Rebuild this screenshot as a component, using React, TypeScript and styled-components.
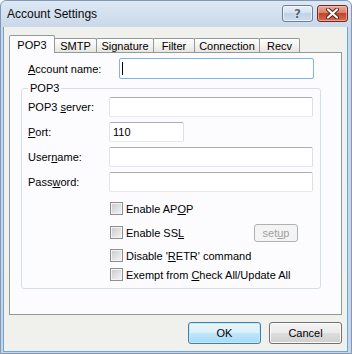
import styled, { createGlobalStyle } from "styled-components";

const GlobalStyle = createGlobalStyle`
  html, body { margin:0; padding:0; background:#ffffff; }
  body {
    font-family: "Liberation Sans", Arial, sans-serif;
    font-size:11px;
    color:#000;
  }
`;

// Window : Vista basic 스타일의 대화상자 프레임.
const Window = styled.div`
  box-sizing:border-box;
  width:352px;
  height:354px;
  display:flex;
  flex-direction:column;
  padding:0 3px 1px 2px;
  border:1px solid #8298b3;
  border-radius:6px 6px 0 0;
  background:linear-gradient(#dde8f4, #c9d8ea 26px, #c6d6ea);
`;

const TitleBar = styled.div`
  display:flex;
  align-items:center;
  height:26px;
  padding-left:4px;
  flex-shrink:0;
`;

const Title = styled.span`
  flex-grow:1;
  font-size:12px;
  color:#0a0a0a;
`;

const CaptionButtons = styled.div`
  display:flex;
  gap:4px;
  margin-top:-1px;
`;

const CaptionButton = styled.div<{ $close?: boolean }>`
  box-sizing:border-box;
  width:31px;
  height:17px;
  display:flex;
  align-items:center;
  justify-content:center;
  border:1px solid ${({ $close }) => ($close ? "#6e2b20" : "#6d7f99")};
  border-radius:3px;
  box-shadow:inset 0 0 0 1px ${({ $close }) => ($close ? "rgba(255,210,200,.55)" : "rgba(255,255,255,.6)")};
  background:${({ $close }) =>
    $close
      ? "linear-gradient(#e9a898, #d67e68 50%, #c4442b 50%, #d46a52)"
      : "linear-gradient(#e8f0f9, #d4e0ee 50%, #c2d3e8 50%, #cddcee)"};
  font-family:"DejaVu Sans", sans-serif;
  font-weight:bold;
  font-size:12px;
  color:#55657b;
  text-shadow:0 0 1px #fff, 0 0 1px #fff;
`;

const Client = styled.div`
  flex-grow:1;
  display:flex;
  flex-direction:column;
  padding:8px 5px 7px 5px;
  border:1px solid #6aa7d1;
  border-top:none;
  background:#f0f0ed;
`;

const TabStrip = styled.div`
  display:flex;
  align-items:flex-end;
  height:17px;
  position:relative;
  z-index:1;
`;

const Tab = styled.div<{ $w: number; $active?: boolean }>`
  box-sizing:border-box;
  width:${({ $w }) => $w}px;
  height:${({ $active }) => ($active ? 18 : 14)}px;
  margin-right:-1px;
  margin-bottom:${({ $active }) => ($active ? -1 : 0)}px;
  display:flex;
  align-items:center;
  justify-content:center;
  padding-top:${({ $active }) => ($active ? 0 : 1)}px;
  border:1px solid #919b9c;
  border-bottom:none;
  border-radius:2px 2px 0 0;
  background:${({ $active }) =>
    $active ? "#fcfcfe" : "linear-gradient(#fefefe, #f1f0ec 60%, #e6e5e0)"};
  position:relative;
  z-index:${({ $active }) => ($active ? 2 : 1)};
`;

const Panel = styled.div`
  box-sizing:border-box;
  height:263px;
  display:flex;
  flex-direction:column;
  padding:5px 0 0 11px;
  border:1px solid #919b9c;
  background:#fcfcfe;
`;

const AccountRow = styled.div`
  display:flex;
  align-items:center;
  height:21px;
  padding-left:7px;
`;

const FieldLabel = styled.span<{ $w: number }>`
  width:${({ $w }) => $w}px;
  flex-shrink:0;
`;

const Key = styled.span`
  text-decoration:underline;
  text-underline-offset:1px;
`;

const TextBox = styled.div<{ $w?: number; $h?: number; $focus?: boolean }>`
  box-sizing:border-box;
  ${({ $w }) => ($w ? `width:${$w}px;` : "flex-grow:1;")}
  height:${({ $h }) => $h ?? 20}px;
  display:flex;
  align-items:center;
  padding:0 3px 0 ${({ $focus }) => ($focus ? 2 : 3)}px;
  border:1px solid;
  border-color:${({ $focus }) =>
    $focus ? "#7eb4ea" : "#abadb3 #dbdfe6 #e3e9ef #e2e3ea"};
  border-radius:2px;
  background:#fff;
`;

const Caret = styled.span`
  width:1px;
  height:13px;
  background:#000;
`;

const Group = styled.fieldset`
  box-sizing:border-box;
  width:300px;
  min-inline-size:0;
  margin:3px 0 0 0;
  padding:2px 7px 4px 6px;
  border:1px solid #d5dfe5;
  border-radius:3px;
`;

const Legend = styled.legend`
  padding:0 2px;
  line-height:13px;
`;

const GroupBody = styled.div`
  display:flex;
  flex-direction:column;
`;

const FieldRow = styled.div<{ $mt?: number }>`
  display:flex;
  align-items:center;
  height:20px;
  margin-top:${({ $mt }) => $mt ?? 0}px;
`;

const CheckRow = styled.div<{ $mt: number }>`
  display:flex;
  align-items:center;
  height:19px;
  padding-left:82px;
  margin-top:${({ $mt }) => $mt}px;
`;

const CheckBox = styled.span`
  box-sizing:border-box;
  width:13px;
  height:13px;
  margin-right:3px;
  flex-shrink:0;
  border:1px solid #8f8f8f;
  box-shadow:inset 0 0 0 1px #f4f4f4;
  background:linear-gradient(135deg, #c9c9c9, #e4e4e4 60%, #f5f5f5);
`;

const SetupButton = styled.div`
  box-sizing:border-box;
  width:44px;
  height:18px;
  margin-left:auto;
  margin-right:15px;
  display:flex;
  align-items:center;
  justify-content:center;
  border:1px solid #adb2b5;
  border-radius:3px;
  background:#f4f4f4;
  color:#a0a0a0;
`;

const ButtonRow = styled.div`
  display:flex;
  justify-content:flex-end;
  gap:8px;
  margin-top:7px;
`;

const DialogButton = styled.div<{ $default?: boolean }>`
  box-sizing:border-box;
  width:73px;
  height:22px;
  display:flex;
  align-items:center;
  justify-content:center;
  border:1px solid ${({ $default }) => ($default ? "#3c7fb1" : "#707070")};
  border-radius:3px;
  box-shadow:inset 0 0 0 1px ${({ $default }) => ($default ? "#c8e8f8" : "#fbfbfb")};
  background:${({ $default }) =>
    $default
      ? "linear-gradient(#eaf6fd, #d9f0fc 50%, #bee6fd 50%, #a7d9f5)"
      : "linear-gradient(#f2f2f2, #ebebeb 50%, #dddddd 50%, #cfcfcf)"};
`;

const CloseGlyph = () => (
  <svg width="13" height="11" viewBox="0 0 13 11">
    <path d="M2 1.5 L11 9.5 M11 1.5 L2 9.5" stroke="#5a2015" strokeWidth="4" strokeLinecap="round" />
    <path d="M2 1.5 L11 9.5 M11 1.5 L2 9.5" stroke="#ffffff" strokeWidth="2.2" strokeLinecap="round" />
  </svg>
);

const tabs = [
  { label: "POP3", w: 46 },
  { label: "SMTP", w: 43 },
  { label: "Signature", w: 58 },
  { label: "Filter", w: 42 },
  { label: "Connection", w: 66 },
  { label: "Recv", w: 41 },
];

export default function App() {
  return (
    <>
      <GlobalStyle />
      <Window>
        <TitleBar>
          <Title>Account Settings</Title>
          <CaptionButtons>
            <CaptionButton>?</CaptionButton>
            <CaptionButton $close>
              <CloseGlyph />
            </CaptionButton>
          </CaptionButtons>
        </TitleBar>
        <Client>
          <TabStrip>
            {tabs.map((t, i) => (
              <Tab key={t.label} $w={t.w} $active={i === 0}>
                {t.label}
              </Tab>
            ))}
          </TabStrip>
          <Panel>
            <AccountRow>
              <FieldLabel $w={91}>
                <Key>A</Key>ccount name:
              </FieldLabel>
              <TextBox $w={195} $h={21} $focus>
                <Caret />
              </TextBox>
            </AccountRow>
            <Group>
              <Legend>POP3</Legend>
              <GroupBody>
                <FieldRow>
                  <FieldLabel $w={81}>
                    POP3 <Key>s</Key>erver:
                  </FieldLabel>
                  <TextBox />
                </FieldRow>
                <FieldRow $mt={5}>
                  <FieldLabel $w={81}>
                    <Key>P</Key>ort:
                  </FieldLabel>
                  <TextBox $w={75}>110</TextBox>
                </FieldRow>
                <FieldRow $mt={5}>
                  <FieldLabel $w={81}>
                    User<Key>n</Key>ame:
                  </FieldLabel>
                  <TextBox />
                </FieldRow>
                <FieldRow $mt={5}>
                  <FieldLabel $w={81}>
                    Pass<Key>w</Key>ord:
                  </FieldLabel>
                  <TextBox />
                </FieldRow>
                <CheckRow $mt={7}>
                  <CheckBox />
                  <span>
                    Enable AP<Key>O</Key>P
                  </span>
                </CheckRow>
                <CheckRow $mt={5}>
                  <CheckBox />
                  <span>
                    Enable SS<Key>L</Key>
                  </span>
                  <SetupButton>
                    <span>
                      set<Key>u</Key>p
                    </span>
                  </SetupButton>
                </CheckRow>
                <CheckRow $mt={4}>
                  <CheckBox />
                  <span>
                    Disable '<Key>R</Key>ETR' command
                  </span>
                </CheckRow>
                <CheckRow $mt={0}>
                  <CheckBox />
                  <span>
                    Exempt from <Key>C</Key>heck All/Update All
                  </span>
                </CheckRow>
              </GroupBody>
            </Group>
          </Panel>
          <ButtonRow>
            <DialogButton $default>OK</DialogButton>
            <DialogButton>Cancel</DialogButton>
          </ButtonRow>
        </Client>
      </Window>
    </>
  );
}
